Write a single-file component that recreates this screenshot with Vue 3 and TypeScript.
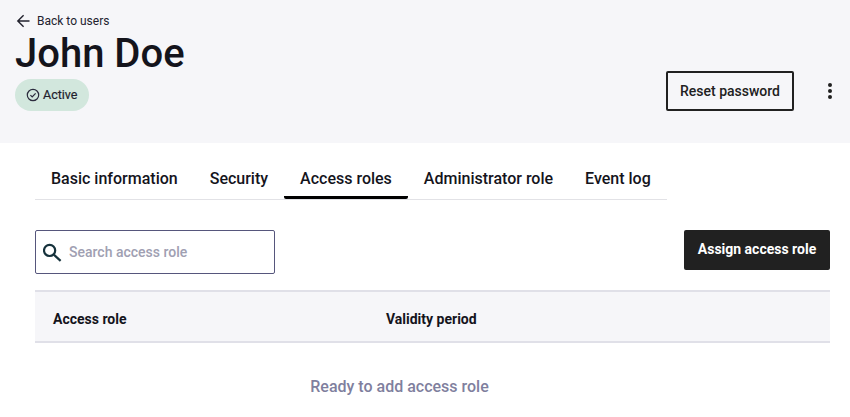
<script setup lang="ts">
const tabs: string[] = ['Basic information', 'Security', 'Access roles', 'Administrator role', 'Event log'];
const activeTab = 'Access roles';
</script>

<template>
  <div class="page">
    <header class="head">
      <div class="head-left">
        <a class="back">
          <svg width="16" height="16" viewBox="0 0 16 16" fill="none" stroke="#22222e" stroke-width="1.4">
            <path d="M13.5 8H2M7.6 2.2 1.8 8 7.6 13.8" />
          </svg>
          <span>Back to users</span>
        </a>
        <h1>John Doe</h1>
        <span class="badge">
          <svg width="14" height="14" viewBox="0 0 14 14" fill="none" stroke="#2b2b3d" stroke-width="1.2">
            <circle cx="7" cy="7" r="5.7" />
            <path d="M4.4 7.2 6.2 9l3.4-3.6" />
          </svg>
          <span class="badge-text">Active</span>
        </span>
      </div>
      <div class="head-actions">
        <button class="btn-outline">Reset password</button>
        <span class="kebab"><i></i><i></i><i></i></span>
      </div>
    </header>

    <main class="content">
      <nav class="tabs">
        <div v-for="tab in tabs" :key="tab" class="tab" :class="{ active: tab === activeTab }">{{ tab }}</div>
      </nav>

      <div class="toolbar">
        <label class="search">
          <svg width="20" height="20" viewBox="0 0 20 20" fill="none" stroke="#16323c" stroke-width="2.2">
            <circle cx="6.6" cy="8.4" r="5.6" />
            <path d="m10.8 12.6 6.8 6.3" />
          </svg>
          <input type="text" placeholder="Search access role" />
        </label>
        <button class="btn-dark">Assign access role</button>
      </div>

      <div class="table-head">
        <div class="col-role">Access role</div>
        <div>Validity period</div>
      </div>
      <p class="empty">Ready to add access role</p>
    </main>
  </div>
</template>

<style scoped>
.page {
  width: 850px;
  height: 417px;
  overflow: hidden;
  background: #fff;
  font-family: Roboto, "Liberation Sans", sans-serif;
  color: #14141c;
}

.head {
  height: 143px;
  box-sizing: border-box;
  background: #f6f6f9;
  padding: 12px 18px 0 15px;
  display: flex;
  justify-content: space-between;
}

.back {
  display: flex;
  align-items: center;
  gap: 5px;
  height: 17px;
  font-size: 12px;
  color: #22222e;
  padding-left: 1px;
}

h1 {
  margin: 1px 0 0;
  font-size: 40px;
  line-height: 48px;
  font-weight: 500;
  color: #14141c;
}

.badge {
  display: inline-flex;
  align-items: center;
  gap: 3px;
  height: 32px;
  margin-top: 1px;
  padding: 0 12px 0 11px;
  border-radius: 16px;
  background: #d2e7dd;
  font-size: 12.5px;
  color: #22222e;
  -webkit-text-stroke: 0.2px #22222e;
}

.badge-text {
  margin-top: -2px;
}

.head-actions {
  display: flex;
  align-items: center;
  align-self: flex-start;
  margin-top: 59px;
}

.btn-outline {
  width: 128px;
  height: 40px;
  background: transparent;
  border: 2px solid #212121;
  border-radius: 2px;
  font: 500 14px Roboto, sans-serif;
  color: #212121;
}

.kebab {
  display: flex;
  flex-direction: column;
  gap: 2px;
  margin-left: 34px;
}

.kebab i {
  display: block;
  width: 4px;
  height: 4px;
  border-radius: 50%;
  background: #212121;
}

.content {
  padding: 0 20px 0 35px;
}

.tabs {
  display: flex;
  width: 632px;
  height: 57px;
  box-sizing: border-box;
  border-bottom: 1px solid #e2e2e6;
}

.tab {
  padding: 0 16px;
  height: 56px;
  box-sizing: border-box;
  line-height: 71px;
  font-size: 16px;
  font-weight: 500;
  color: #14141c;
}

.tab.active {
  height: 56px;
  border-bottom: 3px solid #000;
  border-radius: 0 0 2px 2px;
}

.toolbar {
  display: flex;
  justify-content: space-between;
  align-items: flex-start;
  margin-top: 30px;
}

.search {
  display: flex;
  align-items: center;
  gap: 6px;
  width: 240px;
  height: 44px;
  box-sizing: border-box;
  padding-left: 7px;
  border: 1px solid #56567c;
  border-radius: 2px;
}

.search input {
  flex: 1;
  min-width: 0;
  border: 0;
  outline: 0;
  padding: 0;
  background: transparent;
  font: 500 14px Roboto, sans-serif;
}

.search input::placeholder {
  color: #a0a0b2;
  opacity: 1;
}

.btn-dark {
  width: 146px;
  height: 40px;
  padding: 0 0 2px;
  border: 0;
  border-radius: 2px;
  background: #212121;
  color: #fff;
  font: 700 14px Roboto, sans-serif;
}

.table-head {
  display: flex;
  align-items: center;
  height: 53px;
  box-sizing: border-box;
  margin-top: 16px;
  padding: 4px 0 0 18px;
  background: #f6f6f9;
  border-top: 2px solid #e0e0e8;
  border-bottom: 2px solid #e0e0e8;
  font-size: 14px;
  font-weight: 700;
  color: #14141c;
}

.col-role {
  width: 333px;
}

.empty {
  width: 729px;
  margin: 34px 0 0;
  text-align: center;
  font-size: 16px;
  font-weight: 500;
  line-height: 19px;
  color: #7f7f9e;
}
</style>
